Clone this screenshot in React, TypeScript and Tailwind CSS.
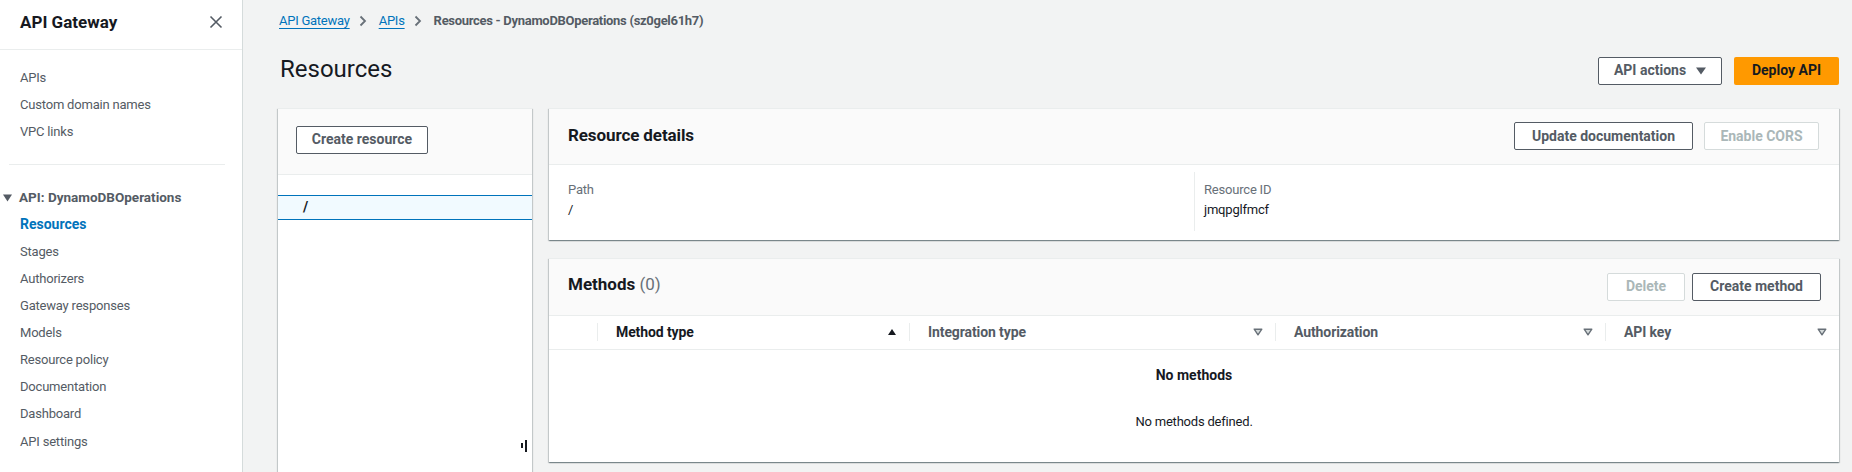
import React from "react";

const topNav = ["APIs", "Custom domain names", "VPC links"];
const apiNav = [
  "Resources",
  "Stages",
  "Authorizers",
  "Gateway responses",
  "Models",
  "Resource policy",
  "Documentation",
  "Dashboard",
  "API settings",
];

function Chevron() {
  return (
    <svg width="8" height="12" viewBox="0 0 8 12" className="ml-[9px] mr-[12px]">
      <polyline points="1.5,1.5 6,6 1.5,10.5" fill="none" stroke="#687078" strokeWidth="1.8" />
    </svg>
  );
}

function SortDown() {
  return (
    <svg width="10" height="8" viewBox="0 0 10 8">
      <polygon points="1.2,1.2 8.8,1.2 5,6.8" fill="#d5dbdb" stroke="#687078" strokeWidth="1.4" strokeLinejoin="round" />
    </svg>
  );
}

function SortUp() {
  return (
    <svg width="10" height="8" viewBox="0 0 10 8">
      <polygon points="1,7 9,7 5,1" fill="#16191f" />
    </svg>
  );
}

const btn =
  "inline-flex h-[28px] items-center justify-center rounded-[2px] border border-[#545b64] bg-white text-[14px] font-bold text-[#545b64]";
const btnOff =
  "inline-flex h-[28px] items-center justify-center rounded-[2px] border border-[#d5dbdb] bg-white text-[14px] font-bold text-[#aab7b8]";
const card =
  "bg-white border-t border-[#eaeded] shadow-[0_1px_1px_0_rgba(0,28,36,0.3),1px_1px_1px_0_rgba(0,28,36,0.15),-1px_1px_1px_0_rgba(0,28,36,0.15)]";
const body = "text-[13px] tracking-[-0.2px]";

function HeadCell({ label, dark, icon }: { label: string; dark?: boolean; icon: React.ReactNode }) {
  return (
    <div className="flex items-center">
      <span className="h-[18px] w-px bg-[#eaeded]" />
      <span className={`ml-[18px] text-[14px] font-bold tracking-[-0.1px] ${dark ? "text-[#16191f]" : "text-[#545b64]"}`}>
        {label}
      </span>
      <span className="ml-auto mr-[12px] flex">{icon}</span>
    </div>
  );
}

export default function App() {
  return (
    <div className="flex h-[472px] w-full overflow-hidden bg-[#f2f3f3] [font-family:Roboto,'Noto_Sans',sans-serif]">
      <aside className="w-[243px] shrink-0 border-r border-[#d5dbdb] bg-white">
        <div className="flex h-[50px] items-start justify-between border-b border-[#eaeded] pl-5 pr-[19px] pt-[11px]">
          <span className="text-[17px] font-bold leading-[22px] text-[#16191f]">API Gateway</span>
          <svg width="14" height="14" viewBox="0 0 14 14" className="mt-[4px]">
            <path d="M1.5 1.5 12.5 12.5M12.5 1.5 1.5 12.5" stroke="#545b64" strokeWidth="1.6" />
          </svg>
        </div>
        <ul className="pt-[14px]">
          {topNav.map((n) => (
            <li key={n} className={`flex h-[27px] items-center pl-5 text-[#545b64] ${body}`}>
              {n}
            </li>
          ))}
        </ul>
        <div className="ml-[9px] mr-[17px] mt-[19px] border-t border-[#eaeded]" />
        <div className="mt-[19px] flex h-[27px] items-center pl-[3px] text-[13.5px] font-bold text-[#545b64]">
          <svg width="9" height="8" viewBox="0 0 9 8">
            <polygon points="0,0.5 9,0.5 4.5,7.5" fill="#545b64" />
          </svg>
          <span className="ml-[7px]">API: DynamoDBOperations</span>
        </div>
        <ul>
          {apiNav.map((n, i) => (
            <li
              key={n}
              className={`flex h-[27.1px] items-center pl-5 ${
                i === 0 ? "text-[14px] font-bold text-[#0073bb]" : `text-[#545b64] ${body}`
              }`}
            >
              {n}
            </li>
          ))}
        </ul>
      </aside>

      <main className="flex min-w-0 flex-1 flex-col pl-[35px] pr-[13px] pt-[11px]">
        <nav className="flex h-5 items-center pl-[1px] text-[13px]">
          <span className="tracking-[-0.25px] text-[#0073bb] underline underline-offset-[3px]">API Gateway</span>
          <Chevron />
          <span className="tracking-[-0.25px] text-[#0073bb] underline underline-offset-[3px]">APIs</span>
          <Chevron />
          <span className="text-[13px] font-bold tracking-[-0.3px] text-[#545b64]">
            Resources - DynamoDBOperations (sz0gel61h7)
          </span>
        </nav>

        <div className="mt-[26px] flex items-start justify-between">
          <h1 className="pl-[2px] text-[24px] leading-[24px] text-[#16191f]">Resources</h1>
          <div className="flex gap-3">
            <button className={`${btn} w-[124px] gap-[10px]`}>
              API actions
              <svg width="10" height="8" viewBox="0 0 10 8">
                <polygon points="0,0.5 10,0.5 5,7.5" fill="#545b64" />
              </svg>
            </button>
            <button className="inline-flex h-[28px] w-[105px] items-center justify-center rounded-[2px] bg-[#ff9900] text-[14px] font-bold text-[#16191f]">
              Deploy API
            </button>
          </div>
        </div>

        <div className="mt-[23px] flex flex-1 gap-[17px]">
          <section className={`${card} flex h-[420px] w-[254px] shrink-0 flex-col`}>
            <div className="h-[66px] border-b border-[#eaeded] bg-[#fafafa] pl-[18px] pt-[17px]">
              <button className={`${btn} w-[132px]`}>Create resource</button>
            </div>
            <div className="mt-[20px] flex h-[25px] items-center border-y border-[#0073bb] bg-[#f1faff] pl-[25px] text-[14px] font-bold text-[#16191f]">
              /
            </div>
            <div className="mt-[220px] flex items-center justify-end gap-[2px] pr-[5px]">
              <span className="h-[5px] w-[2px] bg-[#16191f]" />
              <span className="h-[12px] w-[2px] bg-[#16191f]" />
            </div>
          </section>

          <div className="flex min-w-0 flex-1 flex-col gap-[18px]">
            <section className={card}>
              <div className="flex h-[56px] items-center justify-between border-b border-[#eaeded] bg-[#fafafa] pl-[19px] pr-[20px]">
                <h2 className="mb-[1px] text-[17px] font-bold tracking-[-0.1px] text-[#16191f]">Resource details</h2>
                <div className="flex gap-[11px]">
                  <button className={`${btn} w-[179px]`}>Update documentation</button>
                  <button className={`${btnOff} w-[115px]`}>Enable CORS</button>
                </div>
              </div>
              <div className={`grid h-[75px] grid-cols-2 leading-[20px] ${body}`}>
                <div className="pl-[19px] pt-[15px]">
                  <div className="text-[#687078]">Path</div>
                  <div className="text-[#16191f]">/</div>
                </div>
                <div className="mb-[9px] mt-[7px] border-l border-[#eaeded] pl-[9px] pt-[8px]">
                  <div className="text-[#687078]">Resource ID</div>
                  <div className="text-[#16191f]">jmqpglfmcf</div>
                </div>
              </div>
            </section>

            <section className={card}>
              <div className="flex h-[57px] items-center justify-between border-b border-[#eaeded] bg-[#fafafa] pl-[19px] pr-[18px]">
                <h2 className="mb-[3px] text-[17px] font-bold text-[#16191f]">
                  Methods <span className="font-normal text-[#687078]">(0)</span>
                </h2>
                <div className="flex gap-[7px]">
                  <button className={`${btnOff} w-[78px]`}>Delete</button>
                  <button className={`${btn} w-[129px]`}>Create method</button>
                </div>
              </div>
              <div className="grid h-[34px] grid-cols-[48px_312px_366px_330px_1fr] border-b border-[#eaeded]">
                <div />
                <HeadCell label="Method type" dark icon={<SortUp />} />
                <HeadCell label="Integration type" icon={<SortDown />} />
                <HeadCell label="Authorization" icon={<SortDown />} />
                <HeadCell label="API key" icon={<SortDown />} />
              </div>
              <div className="flex h-[112px] flex-col items-center pt-[15px] text-[14px] leading-[20px] text-[#16191f]">
                <div className="font-bold">No methods</div>
                <div className={`mt-[27px] ${body}`}>No methods defined.</div>
              </div>
            </section>
          </div>
        </div>
      </main>
    </div>
  );
}
